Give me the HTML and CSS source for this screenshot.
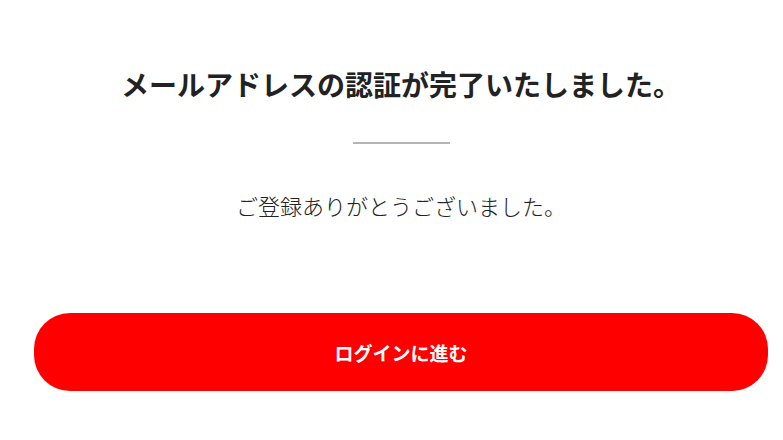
FILE: index.html
```html
<!DOCTYPE html>
<html lang="ja">
<head>
<meta charset="utf-8">
<title>メールアドレスの認証</title>
<link rel="stylesheet" href="styles.css">
</head>
<body>
<main class="page">
  <h1 class="title">メールアドレスの認証が完了いたしました。</h1>
  <hr class="divider">
  <p class="message">ご登録ありがとうございました。</p>
  <a class="btn" href="#">ログインに進む</a>
</main>
</body>
</html>
```

FILE: styles.css
```css
html, body {
  margin: 0;
  padding: 0;
  background: #ffffff;
}
body {
  font-family: "Noto Sans CJK JP", "Noto Sans", sans-serif;
  color: #222222;
}
.page {
  display: flex;
  flex-direction: column;
  align-items: center;
  padding: 65px 15px 0 34px;
}
.title {
  margin: 0;
  font-size: 28px;
  line-height: 39px;
  font-weight: 700;
  color: #222222;
  white-space: nowrap;
}
.divider {
  width: 97px;
  height: 2px;
  margin: 38px 0 0;
  border: 0;
  background: #b4b4b4;
}
.message {
  margin: 45px 0 0;
  font-size: 22px;
  line-height: 33px;
  font-weight: 300;
  color: #222222;
  white-space: nowrap;
}
.btn {
  align-self: stretch;
  display: flex;
  align-items: center;
  justify-content: center;
  margin-top: 91px;
  height: 78px;
  border-radius: 36px;
  background: #ff0000;
  color: #ffffff;
  font-size: 19px;
  font-weight: 700;
  text-decoration: none;
}
```
